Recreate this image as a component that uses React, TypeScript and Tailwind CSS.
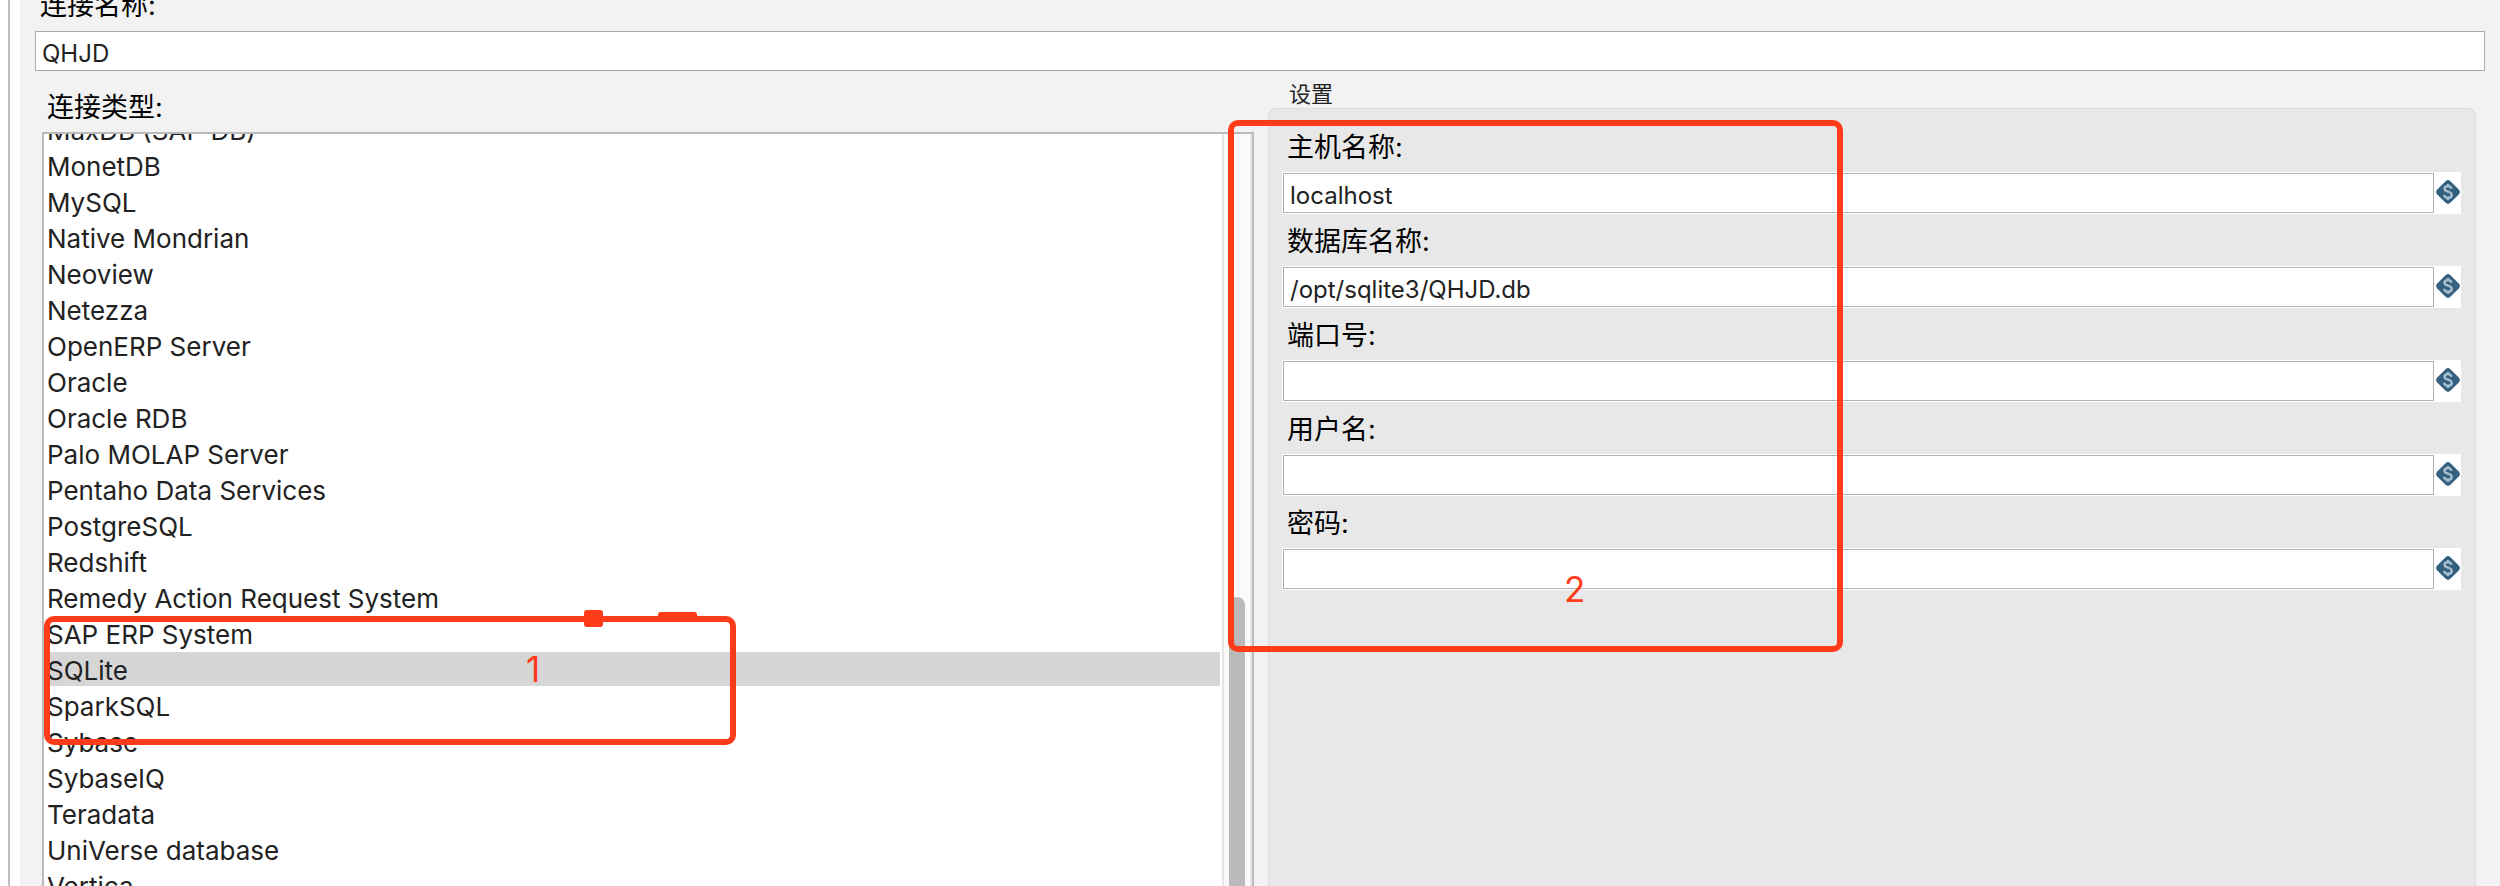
import { useState } from "react";

const connectionTypes = [
  "MaxDB (SAP DB)",
  "MonetDB",
  "MySQL",
  "Native Mondrian",
  "Neoview",
  "Netezza",
  "OpenERP Server",
  "Oracle",
  "Oracle RDB",
  "Palo MOLAP Server",
  "Pentaho Data Services",
  "PostgreSQL",
  "Redshift",
  "Remedy Action Request System",
  "SAP ERP System",
  "SQLite",
  "SparkSQL",
  "Sybase",
  "SybaseIQ",
  "Teradata",
  "UniVerse database",
  "Vertica",
];

const settings = [
  { id: "host", label: "主机名称:", value: "localhost" },
  { id: "database", label: "数据库名称:", value: "/opt/sqlite3/QHJD.db" },
  { id: "port", label: "端口号:", value: "" },
  { id: "user", label: "用户名:", value: "" },
  { id: "password", label: "密码:", value: "" },
];

function VariableIcon() {
  return (
    <svg viewBox="0 0 24 24" className="size-6" aria-hidden="true">
      <path
        d="M9.6 1.2Q12 -1 14.4 1.2L22.8 9.6Q25 12 22.8 14.4L14.4 22.8Q12 25 9.6 22.8L1.2 14.4Q-1 12 1.2 9.6Z"
        fill="#35607f"
      />
      <path
        d="M15.4 8.9C15.2 7 14.1 6.1 12 6.1C9.9 6.1 8.5 7.1 8.5 8.8C8.5 10.8 10.1 11.2 12 11.7C14 12.2 15.7 12.8 15.7 14.9C15.7 16.8 14.3 17.8 12 17.8C9.7 17.8 8.3 16.8 8.2 14.8M12 4V6M12 18V20"
        fill="none"
        stroke="#a9c0d0"
        strokeWidth="2.4"
      />
    </svg>
  );
}

function SettingField({ id, label, value }: { id: string; label: string; value: string }) {
  return (
    <div className="flex flex-col">
      <label htmlFor={id} className="h-13 pl-[5px] text-[27px] leading-[56px] text-black">
        {label}
      </label>
      <div className="flex h-[42px] bg-white">
        <input
          id={id}
          type="text"
          defaultValue={value}
          className="my-px ml-px h-10 min-w-0 flex-1 border border-[#b0b0b0] bg-white px-1.5 pt-1 text-2xl text-[#222] outline-none"
        />
        <button type="button" aria-label="插入变量" className="flex w-[27px] justify-center pt-2">
          <VariableIcon />
        </button>
      </div>
    </div>
  );
}

export default function App() {
  const [selected, setSelected] = useState("SQLite");

  return (
    <div className="relative flex h-screen overflow-hidden bg-white font-['Inter','Noto_Sans_CJK_SC',sans-serif]">
      <div className="mr-2.5 ml-2 w-0.5 shrink-0 bg-[#bfbfbf]" />

      <main className="flex min-w-0 flex-1 flex-col bg-[#f2f2f2] px-[15px]">
        <label htmlFor="name" className="-mt-3 mb-[7px] pl-[5px] text-[27px] leading-9 text-black">
          连接名称:
        </label>
        <input
          id="name"
          type="text"
          defaultValue="QHJD"
          className="h-10 w-full shrink-0 border border-[#aaa] bg-white px-1.5 pt-1 text-2xl text-[#222] outline-none"
        />

        <div className="grid min-h-0 flex-1 grid-cols-[303fr_302fr] gap-3.5 pr-[9px] pl-[7px]">
          <section className="flex min-h-0 flex-col">
            <h2 id="types" className="pt-[17px] pb-1 pl-[5px] text-[27px] leading-10 text-black">
              连接类型:
            </h2>
            <div className="flex min-h-0 flex-1 overflow-hidden border-2 border-b-0 border-[#bbb] bg-white">
              <ul role="listbox" aria-labelledby="types" className="-mt-[22px] min-w-0 flex-1 pr-0.5">
                {connectionTypes.map((type) => (
                  <li
                    key={type}
                    role="option"
                    aria-selected={type === selected}
                    onClick={() => setSelected(type)}
                    className="mb-0.5 h-[34px] pl-[3px] text-[26px] leading-[38px] whitespace-nowrap text-[#222] aria-selected:bg-[#d6d6d6]"
                  >
                    {type}
                  </li>
                ))}
              </ul>
              <div className="flex w-[30px] flex-col items-center border-x-2 border-[#e6e6e6] bg-[#fafafa] pt-[463px]">
                <div className="w-4 flex-1 rounded-t-full bg-[#bababa]" />
              </div>
            </div>
          </section>

          <section className="flex min-h-0 flex-col">
            <h2 className="pt-[9px] pl-[21px] text-[22px] leading-7 text-[#222]">设置</h2>
            <div className="flex-1 rounded-t-lg border border-b-0 border-[#dcdcdc] bg-[#e8e8e8] pt-[11px] pr-3.5 pl-[13px]">
              {settings.map((field) => (
                <SettingField key={field.id} {...field} />
              ))}
            </div>
          </section>
        </div>
      </main>

      <div className="pointer-events-none absolute top-[616px] left-[44px] h-[129px] w-[692px] rounded-[10px] border-6 border-[#ff3b1a]" />
      <div className="pointer-events-none absolute top-[610px] left-[584px] h-[17px] w-[19px] rounded-[3px] bg-[#ff3b1a]" />
      <div className="pointer-events-none absolute top-[612px] left-[658px] h-2 w-[39px] rounded-t-[3px] bg-[#ff3b1a]" />
      <span className="pointer-events-none absolute top-[649px] left-[526px] text-[35px] leading-10 text-[#ff3b1a]">
        1
      </span>
      <div className="pointer-events-none absolute top-[120px] left-[1228px] h-[532px] w-[615px] rounded-[10px] border-6 border-[#ff3b1a]" />
      <span className="pointer-events-none absolute top-[569px] left-[1564px] text-[35px] leading-10 text-[#ff3b1a]">
        2
      </span>
    </div>
  );
}
